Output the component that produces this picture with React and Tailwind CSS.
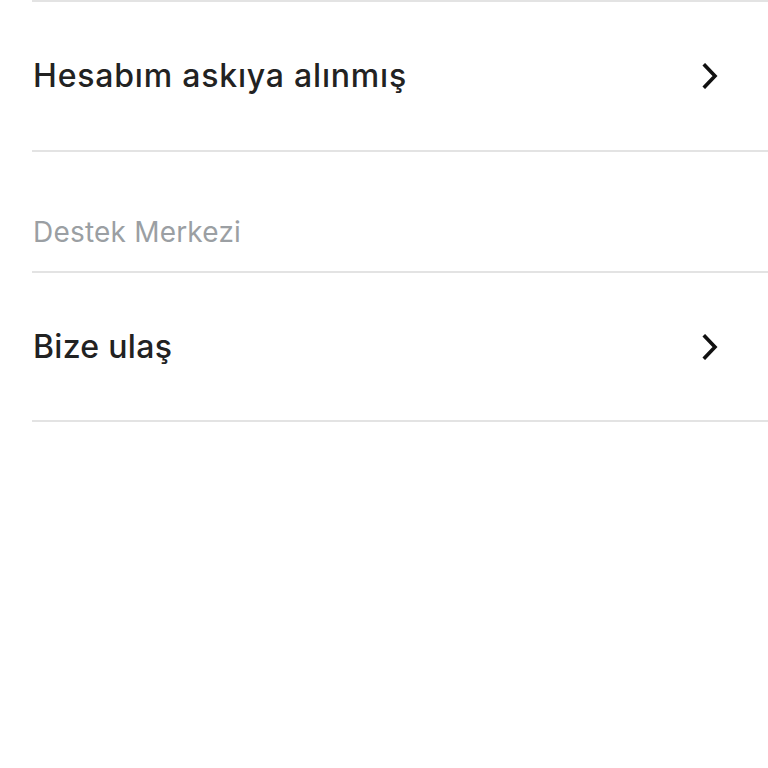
export default function App() {
  const Chevron = () => (
    <svg width="18" height="26" viewBox="0 0 18 26" className="shrink-0">
      <path d="M4 2.5 L14 13 L4 23.5" fill="none" stroke="#111" strokeWidth="3.6" strokeLinecap="square" strokeLinejoin="miter" />
    </svg>
  );
  return (
    <div className="w-[768px] h-[768px] bg-white pl-8" style={{ fontFamily: "Inter, 'Noto Sans', sans-serif" }}>
      <div className="border-t-2 border-[#e3e3e3] h-[150px] flex items-center justify-between pr-[49px]">
        <span className="text-[32px] font-medium text-[#222] tracking-[0.8px] pl-px">Hesabım askıya alınmış</span>
        <Chevron />
      </div>
      <div className="border-t-2 border-[#e3e3e3] h-[121px] flex items-center pt-[40px]">
        <span className="text-[28px] text-[#9b9fa3] tracking-[0.2px] pl-px">Destek Merkezi</span>
      </div>
      <div className="border-t-2 border-b-2 border-[#e3e3e3] h-[151px] flex items-center justify-between pr-[49px]">
        <span className="text-[32px] font-medium text-[#222] tracking-[0.3px] pl-px">Bize ulaş</span>
        <Chevron />
      </div>
    </div>
  );
}
